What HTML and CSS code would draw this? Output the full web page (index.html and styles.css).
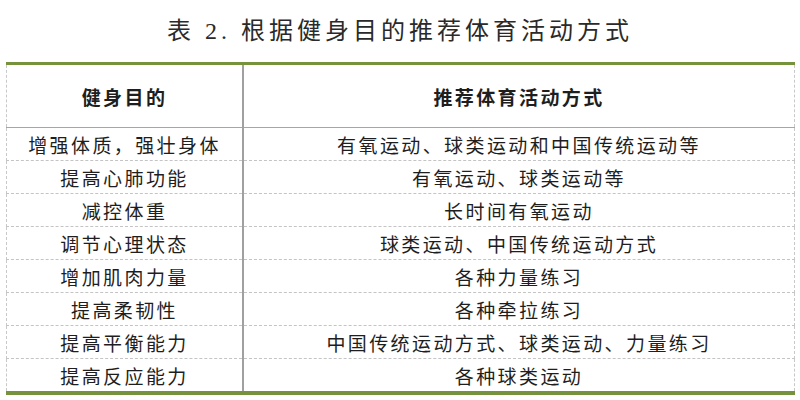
FILE: index.html
```html
<!DOCTYPE html>
<html lang="zh">
<head>
<meta charset="utf-8">
<link rel="stylesheet" href="styles.css">
</head>
<body>
<div class="page">
  <h1 class="title">表 2. 根据健身目的推荐体育活动方式</h1>
  <table class="tbl">
    <thead>
      <tr><th class="c1">健身目的</th><th class="c2">推荐体育活动方式</th></tr>
    </thead>
    <tbody>
      <tr><td class="c1">增强体质，强壮身体</td><td class="c2">有氧运动、球类运动和中国传统运动等</td></tr>
      <tr><td class="c1">提高心肺功能</td><td class="c2">有氧运动、球类运动等</td></tr>
      <tr><td class="c1">减控体重</td><td class="c2">长时间有氧运动</td></tr>
      <tr><td class="c1">调节心理状态</td><td class="c2">球类运动、中国传统运动方式</td></tr>
      <tr><td class="c1">增加肌肉力量</td><td class="c2">各种力量练习</td></tr>
      <tr><td class="c1">提高柔韧性</td><td class="c2">各种牵拉练习</td></tr>
      <tr><td class="c1">提高平衡能力</td><td class="c2">中国传统运动方式、球类运动、力量练习</td></tr>
      <tr><td class="c1">提高反应能力</td><td class="c2">各种球类运动</td></tr>
    </tbody>
  </table>
</div>
</body>
</html>
```
FILE: styles.css
```css
html, body {
  margin: 0;
  padding: 0;
  background: #fff;
}
.page {
  width: 800px;
  height: 400px;
  overflow: hidden;
  font-family: "Noto Sans CJK SC", sans-serif;
  color: #1e1e1e;
}
.title {
  margin: 0;
  height: 62px;
  line-height: 62px;
  text-align: center;
  font-family: "Liberation Serif", "Noto Sans CJK SC", serif;
  font-weight: normal;
  font-size: 24px;
  letter-spacing: 4px;
  color: #2a2a2a;
}
.tbl {
  margin-left: 6px;
  width: 789px;
  border-collapse: collapse;
  border-top: 3px solid #76923c;
  border-bottom: 4px solid #76923c;
  table-layout: fixed;
}
.tbl th, .tbl td {
  padding: 0;
  text-align: center;
  font-size: 19px;
  letter-spacing: 2.4px;
  line-height: 1;
}
.tbl th {
  height: 62px;
  font-weight: bold;
  border-bottom: 1px solid #9bbb59;
}
.tbl td {
  height: 32px;
  border-bottom: 1px dashed #c4c4c4;
}
.tbl tbody tr:last-child td {
  border-bottom: none;
}
.tbl .c1 {
  width: 235px;
  border-left: 1px dashed #c8c8c8;
  border-right: 2px solid #a0a0a0;
}
.tbl .c2 {
  border-right: 1px dashed #c8c8c8;
}
```
